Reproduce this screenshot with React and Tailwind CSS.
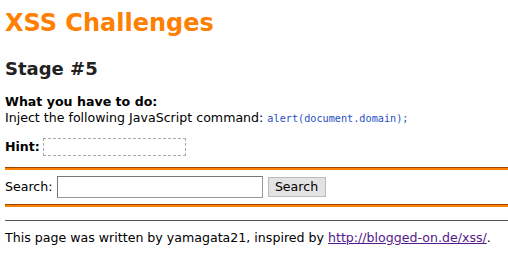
export default function App() {
  return (
    <div className="min-h-[265px] bg-white px-[5px] pt-[8px] text-[12.6px] leading-[16px] text-black font-['DejaVu_Sans',Verdana,sans-serif]">
      <h1 className="text-[24px] leading-[30px] font-bold text-[#ff8000]">XSS Challenges</h1>

      <h2 className="mt-[20px] text-[18px] leading-[22px] font-bold text-[#222]">Stage #5</h2>

      <div className="mt-[14px]">
        <b>What you have to do:</b>
        <div>
          Inject the following JavaScript command:{' '}
          <code className="font-['DejaVu_Sans_Mono',monospace] text-[10.2px] text-[#1f4fbf]">alert(document.domain);</code>
        </div>
      </div>

      <div className="mt-[11px] flex items-center gap-[3px]">
        <b>Hint:</b>
        <span className="h-[18px] w-[143px] border border-dashed border-[#aaa]"></span>
      </div>

      <div className="-mr-[5px] mt-[11px] border-t border-[#a04800] border-b-2 border-b-[#ff8000]"></div>

      <form className="flex items-center py-[6px]">
        <label>Search:</label>
        <input
          type="text"
          className="ml-[4px] h-[22px] w-[206px] border border-[#999] border-t-[#777] border-l-[#777] bg-white outline-none"
        />
        <button
          type="button"
          className="ml-[5px] h-[20px] w-[58px] border border-[#bbb] bg-[#e3e3e3] text-[12.6px] leading-[16px] text-black"
        >
          Search
        </button>
      </form>

      <div className="-mr-[5px] border-t border-[#a04800] border-b-2 border-b-[#ff8000]"></div>

      <div className="-mr-[5px] mt-[13px] border-t border-[#555]"></div>

      <p className="mt-[9px] whitespace-nowrap">
        This page was written by yamagata21, inspired by{' '}
        <a href="#" className="text-[#551a8b] underline">http://blogged-on.de/xss/</a>.
      </p>
    </div>
  );
}
